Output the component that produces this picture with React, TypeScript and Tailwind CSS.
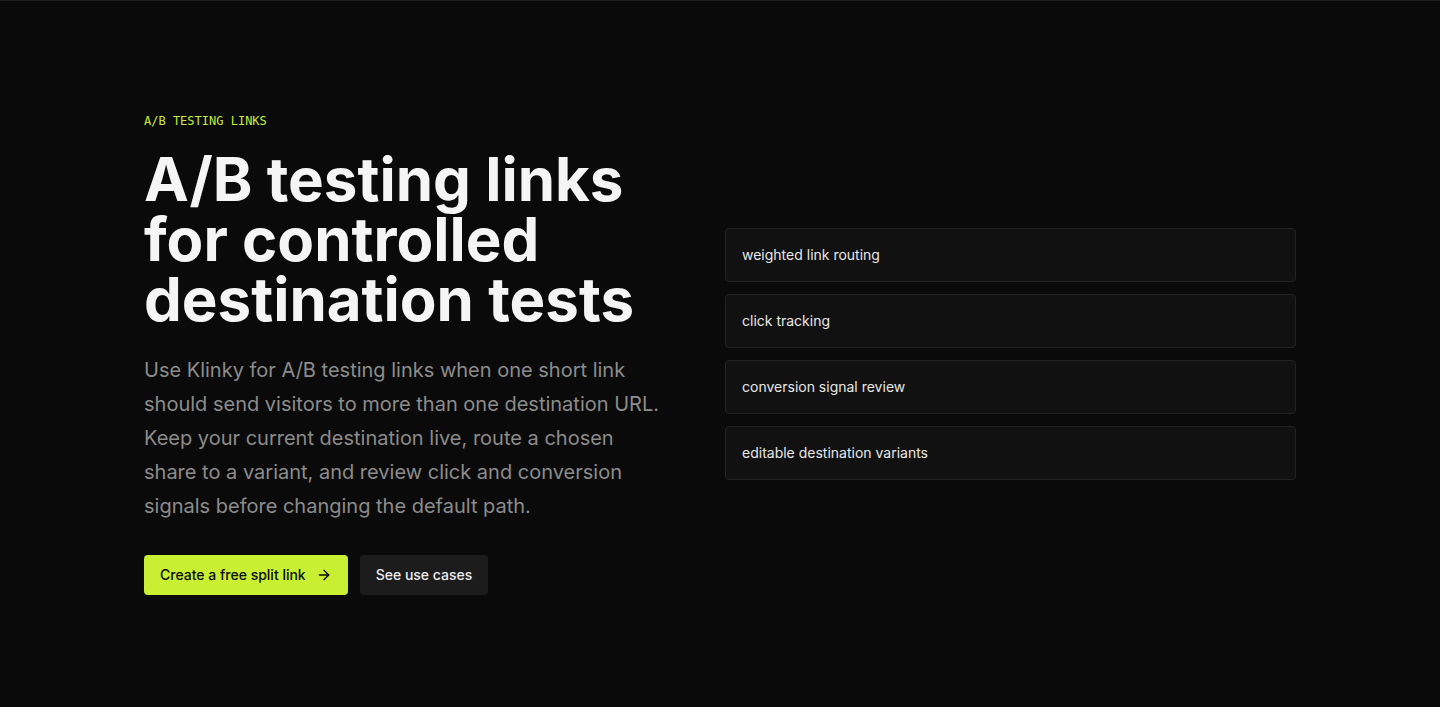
import React from 'react';
import { ArrowRight } from 'lucide-react';

const features = [
  'weighted link routing',
  'click tracking',
  'conversion signal review',
  'editable destination variants',
];

export default function App() {
  return (
    <div
      className="min-h-screen bg-[#0a0a0a] border-t border-[#1f1f1f] text-white"
      style={{ fontFamily: 'Inter, "Noto Sans", sans-serif' }}
    >
      <section className="mx-auto max-w-6xl py-28">
        <div className="grid grid-cols-[517px_1fr] items-center gap-16">
          <div>
            <p
              className="text-xs leading-4 text-[#c6ec3b]"
              style={{ fontFamily: '"DejaVu Sans Mono", "Liberation Mono", monospace' }}
            >
              A/B TESTING LINKS
            </p>
            <h1 className="mt-5 text-6xl font-bold leading-none text-[#f5f5f5]">
              A/B testing links for controlled destination tests
            </h1>
            <p className="mt-6 text-xl leading-[34px] text-[#8c8c8c]">
              Use Klinky for A/B testing links when one short link should send visitors to more than
              one destination URL. Keep your current destination live, route a chosen share to a
              variant, and review click and conversion signals before changing the default path.
            </p>
            <div className="mt-8 flex items-center gap-3">
              <a
                href="#"
                className="flex h-10 items-center gap-2.5 rounded-sm bg-[#c8ef32] px-4 text-sm font-medium text-[#0a0a0a]"
              >
                Create a free split link
                <ArrowRight size={16} strokeWidth={2} />
              </a>
              <a
                href="#"
                className="flex h-10 items-center rounded-sm bg-[#1c1c1c] px-4 text-sm font-medium text-[#ececec]"
              >
                See use cases
              </a>
            </div>
          </div>

          <ul className="flex flex-col gap-3">
            {features.map((item) => (
              <li
                key={item}
                className="rounded border border-[#222222] bg-[#111111] px-4 py-4 text-sm leading-5 text-[#e8e8e8]"
              >
                {item}
              </li>
            ))}
          </ul>
        </div>
      </section>
    </div>
  );
}
